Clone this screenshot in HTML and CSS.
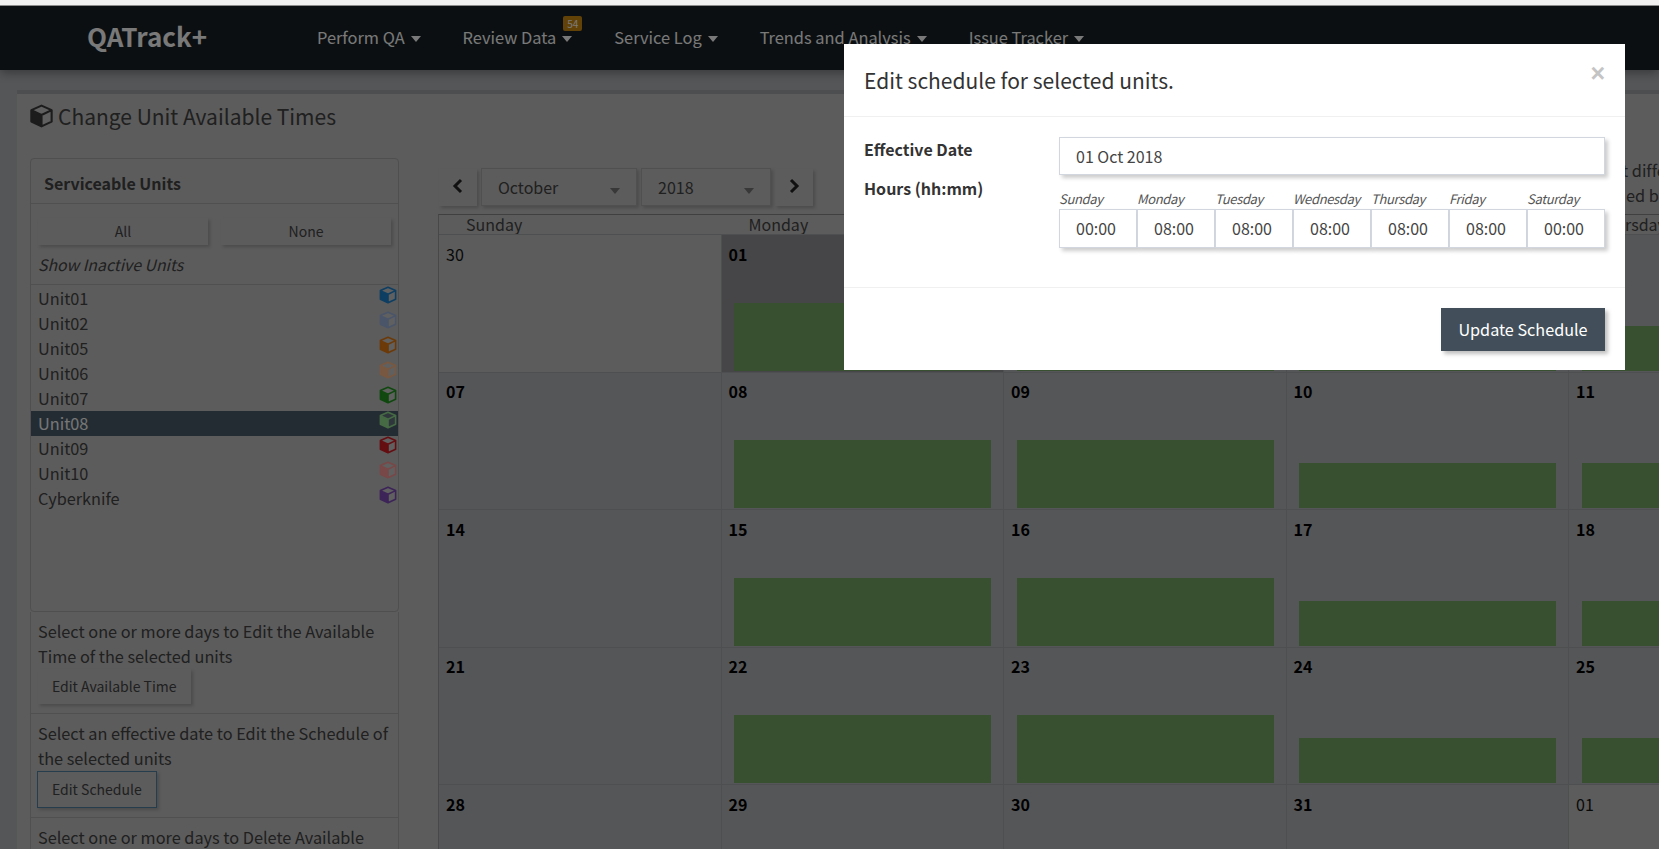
FILE: index.html
```html
<!DOCTYPE html>
<html lang="en">
<head>
<meta charset="utf-8">
<title>Change Unit Available Times</title>
<link rel="stylesheet" href="styles.css">
</head>
<body>
<svg class="defs" width="0" height="0" aria-hidden="true">
  <symbol id="cube" viewBox="0 0 18 18">
    <path class="face" d="M9 1.2 16.6 4.6V13.2L9 16.8 1.4 13.2V4.6Z" fill="#fff" fill-opacity=".12"/>
    <path d="M1.4 5 9 8.4V16.8L1.4 13.2Z" fill="currentColor"/>
    <path d="M9 1.2 16.6 4.6V13.2L9 16.8 1.4 13.2V4.6ZM1.4 4.6 9 8.2 16.6 4.6M9 8.2V16.8" fill="none" stroke="currentColor" stroke-width="1.6" stroke-linejoin="round"/>
  </symbol>
</svg>
<div class="strip"></div>
<div class="app">
  <nav class="nav">
    <a class="logo">QATrack+</a>
    <ul class="menu">
      <li class="menu-item">Perform QA<i class="caret"></i></li>
      <li class="menu-item">Review Data<i class="caret"></i><span class="badge">54</span></li>
      <li class="menu-item">Service Log<i class="caret"></i></li>
      <li class="menu-item">Trends and Analysis<i class="caret"></i></li>
      <li class="menu-item">Issue Tracker<i class="caret"></i></li>
    </ul>
  </nav>
  <main class="wrapper">
    <section class="box">
      <h1 class="title"><svg class="title-icon"><use href="#cube"/></svg>Change Unit Available Times</h1>
      <div class="columns">
        <aside class="sidebar">
          <div class="panel">
            <h2 class="panel-head">Serviceable Units</h2>
            <div class="pick">
              <button class="btn btn-wide">All</button>
              <button class="btn btn-wide">None</button>
            </div>
            <div class="inactive">Show Inactive Units</div>
            <ul class="units">
              <li class="unit">Unit01<svg class="unit-icon c-blue"><use href="#cube"/></svg></li>
              <li class="unit">Unit02<svg class="unit-icon c-blue-l"><use href="#cube"/></svg></li>
              <li class="unit">Unit05<svg class="unit-icon c-orange"><use href="#cube"/></svg></li>
              <li class="unit">Unit06<svg class="unit-icon c-orange-l"><use href="#cube"/></svg></li>
              <li class="unit">Unit07<svg class="unit-icon c-green"><use href="#cube"/></svg></li>
              <li class="unit unit-on">Unit08<svg class="unit-icon c-green-l"><use href="#cube"/></svg></li>
              <li class="unit">Unit09<svg class="unit-icon c-red"><use href="#cube"/></svg></li>
              <li class="unit">Unit10<svg class="unit-icon c-red-l"><use href="#cube"/></svg></li>
              <li class="unit">Cyberknife<svg class="unit-icon c-purple"><use href="#cube"/></svg></li>
            </ul>
          </div>
          <div class="action">
            <p class="action-text">Select one or more days to Edit the Available Time of the selected units</p>
            <button class="btn btn-action">Edit Available Time</button>
          </div>
          <div class="action">
            <p class="action-text">Select an effective date to Edit the Schedule of the selected units</p>
            <button class="btn btn-action btn-focus">Edit Schedule</button>
          </div>
          <div class="action">
            <p class="action-text">Select one or more days to Delete Available Time of the selected units</p>
          </div>
        </aside>
        <div class="calendar">
          <div class="toolbar">
            <button class="btn btn-arrow"><svg class="chev" viewBox="0 0 12 16"><path d="M9 2 3 8l6 6" fill="none" stroke="currentColor" stroke-width="3"/></svg></button>
            <div class="select select-month">October<i class="select-caret"></i></div>
            <div class="select select-year">2018<i class="select-caret"></i></div>
            <button class="btn btn-arrow"><svg class="chev" viewBox="0 0 12 16"><path d="M3 2l6 6-6 6" fill="none" stroke="currentColor" stroke-width="3"/></svg></button>
            <div class="note">t different<span class="note-line">ed by</span></div>
          </div>
          <div class="days">
            <div class="day-name">Sunday</div><div class="day-name">Monday</div><div class="day-name">Tuesday</div><div class="day-name">Wednesday</div><div class="day-name">Thursday</div><div class="day-name">Friday</div><div class="day-name">Saturday</div>
          </div>
          <div class="grid">
            <div class="cell cell-out"><span class="num num-out">30</span></div>
            <div class="cell cell-sel"><span class="num">01</span><i class="bar tall"></i></div>
            <div class="cell"><span class="num">02</span><i class="bar tall"></i></div>
            <div class="cell"><span class="num">03</span><i class="bar short"></i></div>
            <div class="cell"><span class="num">04</span><i class="bar short"></i></div>
            <div class="cell"><span class="num">05</span><i class="bar short"></i></div>
            <div class="cell"><span class="num">06</span></div>

            <div class="cell"><span class="num">07</span></div>
            <div class="cell"><span class="num">08</span><i class="bar tall"></i></div>
            <div class="cell"><span class="num">09</span><i class="bar tall"></i></div>
            <div class="cell"><span class="num">10</span><i class="bar short"></i></div>
            <div class="cell"><span class="num">11</span><i class="bar short"></i></div>
            <div class="cell"><span class="num">12</span><i class="bar short"></i></div>
            <div class="cell"><span class="num">13</span></div>

            <div class="cell"><span class="num">14</span></div>
            <div class="cell"><span class="num">15</span><i class="bar tall"></i></div>
            <div class="cell"><span class="num">16</span><i class="bar tall"></i></div>
            <div class="cell"><span class="num">17</span><i class="bar short"></i></div>
            <div class="cell"><span class="num">18</span><i class="bar short"></i></div>
            <div class="cell"><span class="num">19</span><i class="bar short"></i></div>
            <div class="cell"><span class="num">20</span></div>

            <div class="cell"><span class="num">21</span></div>
            <div class="cell"><span class="num">22</span><i class="bar tall"></i></div>
            <div class="cell"><span class="num">23</span><i class="bar tall"></i></div>
            <div class="cell"><span class="num">24</span><i class="bar short"></i></div>
            <div class="cell"><span class="num">25</span><i class="bar short"></i></div>
            <div class="cell"><span class="num">26</span><i class="bar short"></i></div>
            <div class="cell"><span class="num">27</span></div>

            <div class="cell"><span class="num">28</span></div>
            <div class="cell"><span class="num">29</span></div>
            <div class="cell"><span class="num">30</span></div>
            <div class="cell"><span class="num">31</span></div>
            <div class="cell cell-out"><span class="num num-out">01</span></div>
            <div class="cell cell-out"><span class="num num-out">02</span></div>
            <div class="cell cell-out"><span class="num num-out">03</span></div>
          </div>
        </div>
      </div>
    </section>
  </main>
  <div class="backdrop"></div>
</div>
<div class="modal">
  <header class="modal-head">
    <h3 class="modal-title">Edit schedule for selected units.</h3>
    <span class="close">×</span>
  </header>
  <div class="modal-body">
    <div class="labels">
      <div class="label label-date">Effective Date</div>
      <div class="label">Hours (hh:mm)</div>
    </div>
    <div class="fields">
      <div class="input input-date">01 Oct 2018</div>
      <div class="hours">
        <div class="hour"><span class="hour-name">Sunday</span><div class="input input-hour">00:00</div></div>
        <div class="hour"><span class="hour-name">Monday</span><div class="input input-hour">08:00</div></div>
        <div class="hour"><span class="hour-name">Tuesday</span><div class="input input-hour">08:00</div></div>
        <div class="hour"><span class="hour-name">Wednesday</span><div class="input input-hour">08:00</div></div>
        <div class="hour"><span class="hour-name">Thursday</span><div class="input input-hour">08:00</div></div>
        <div class="hour"><span class="hour-name">Friday</span><div class="input input-hour">08:00</div></div>
        <div class="hour"><span class="hour-name">Saturday</span><div class="input input-hour">00:00</div></div>
      </div>
    </div>
  </div>
  <footer class="modal-foot">
    <button class="btn-primary">Update Schedule</button>
  </footer>
</div>
</body>
</html>
```

FILE: styles.css
```css
* { box-sizing: border-box; }
html, body { margin: 0; padding: 0; height: 849px; overflow: hidden; }
body {
  font-family: "Noto Sans CJK SC", "Noto Sans CJK JP", "Noto Sans", sans-serif;
  font-size: 16px;
  line-height: 25px;
  color: #404040;
  background: #f1f1f1;
}
ul { list-style: none; margin: 0; padding: 0; }
h1, h2, h3, p { margin: 0; font-weight: 400; }
button { font: inherit; cursor: pointer; }
.defs { position: absolute; }

.strip { height: 6px; background: #f1f1f1; border-bottom: 1px solid #8c8c8c; }
.app { position: relative; height: 843px; overflow: hidden; background: #a9adb0; }
.backdrop { position: absolute; inset: 0; background: rgba(0, 0, 0, .5); }

.nav {
  height: 64px;
  display: flex;
  align-items: center;
  background: #161e22;
  color: #fff;
  box-shadow: 0 3px 10px rgba(0, 0, 0, .35);
}
.logo { width: 317px; padding-left: 87px; font-size: 26px; font-weight: 700; line-height: 30px; margin-top: -4px; color: #f2f2f2; }
.menu { display: flex; gap: 42px; margin-top: -2px; }
.menu-item { position: relative; font-size: 16.4px; color: #fff; opacity: .95; }
.caret {
  display: inline-block;
  margin-left: 6px;
  vertical-align: 2px;
  border-left: 5px solid transparent;
  border-right: 5px solid transparent;
  border-top: 6px solid currentColor;
}
.badge {
  position: absolute;
  right: -10px;
  top: -9px;
  width: 19px;
  height: 15px;
  border-radius: 2px;
  background: #d08a10;
  font-size: 10px;
  line-height: 15px;
  text-align: center;
  color: #fff;
}

.wrapper { padding: 20px 0 0 17px; }
.box {
  width: 1800px;
  background: #b8b8b8;
  border-top: 4px solid #9a9da0;
  padding: 0 0 0 13px;
}
.title {
  height: 64px;
  margin-left: -1px;
  display: flex;
  align-items: flex-start;
  padding-top: 7px;
  font-size: 21px;
  line-height: 30px;
  color: #404040;
}
.title-icon { width: 25px; height: 24px; margin: 3px 4px 0 0; color: #383838; }
.columns { display: flex; gap: 39px; align-items: flex-start; }

.sidebar { width: 369px; flex: none; font-size: 16.3px; }
.panel {
  height: 454px;
  border: 1px solid #9e9e9e;
  border-radius: 4px;
  background: #b8b8b8;
}
.panel-head {
  height: 45px;
  padding: 12px 13px 0;
  font-size: 16px;
  font-weight: 700;
  border-bottom: 1px solid #a0a0a0;
}
.pick { display: flex; gap: 13px; padding: 14px 7px 0; }
.btn {
  border: 0;
  background: #b8b8b8;
  color: #404040;
  box-shadow: 2px 2px 3px rgba(0, 0, 0, .18);
}
.btn-wide { width: 171px; height: 27px; font-size: 14px; line-height: 27px; padding: 0; }
.inactive { height: 40px; padding: 7px 7px 0; font-size: 15.8px; font-style: italic; border-bottom: 1px solid #a0a0a0; }
.units { padding-top: 1px; }
.unit {
  display: flex;
  justify-content: space-between;
  height: 25px;
  padding: 0 1px 0 7px;
}
.unit-on { background: #485866; color: #eee; }
.unit-icon { width: 18px; height: 18px; }
.c-blue { color: #1c7cc4; }
.c-blue-l { color: #96aad2; }
.c-orange { color: #d87410; }
.c-orange-l { color: #f0b080; }
.c-green { color: #209020; }
.c-green-l { color: #8cd488; }
.c-red { color: #c81c24; }
.c-red-l { color: #f09090; }
.c-purple { color: #7a48b0; }

.action {
  padding: 7px 7px 9px;
  border: 1px solid #a0a0a0;
  border-top: 0;
}
.btn-action { display: block; height: 35px; padding: 0 14px; font-size: 14px; line-height: 35px; }
.btn-focus { margin: 0 0 0 -1px; height: 37px; border: 1px solid #4a7a98; }

.calendar { flex: none; width: 1978px; }
.toolbar { display: flex; align-items: flex-start; height: 56px; padding: 10px 0 0 1px; gap: 4px; }
.btn-arrow { width: 38px; height: 37px; margin-top: 1px; padding: 0; color: #222; display: flex; align-items: center; justify-content: center; }
.chev { width: 12px; height: 16px; margin-top: -3px; }
.select {
  position: relative;
  height: 38px;
  padding: 6px 16px;
  border: 1px solid #a0a0a0;
  box-shadow: 2px 2px 3px rgba(0, 0, 0, .18);
  line-height: 25px;
}
.select-month { width: 156px; }
.select-year { width: 130px; }
.select-caret {
  position: absolute;
  right: 16px;
  top: 19px;
  border-left: 5px solid transparent;
  border-right: 5px solid transparent;
  border-top: 6px solid #707070;
}
.note { margin-left: 805px; margin-top: -10px; white-space: nowrap; font-variant-ligatures: none; font-size: 16.3px; }
.note-line { display: block; padding-left: 4px; }

.days {
  display: grid;
  grid-template-columns: repeat(7, 282.5px);
  height: 20px;
  border-top: 1px solid #808080;
  border-left: 1px solid #909090;
  line-height: 19px;
  overflow: hidden;
}
.day-name { padding-left: 27px; }
.grid {
  display: grid;
  grid-template-columns: repeat(7, 282.5px);
  grid-auto-rows: 137.5px;
  border-left: 1px solid #909090;
}
.cell {
  display: flex;
  flex-direction: column;
  background: #aaacb0;
  border-top: 1px solid #9c9ea2;
  border-right: 1px solid #9c9ea2;
  padding: 8.5px 0 1px;
}
.cell-out { background: #b8b8b8; }
.cell-sel { background: #8c8c90; }
.num { padding-left: 7px; font-weight: 700; line-height: 20px; color: #000; }
.num-out { font-weight: 400; color: #111; }
.bar { display: block; margin: auto 12px 0 12.5px; background: #70a060; }
.tall { height: 68px; }
.short { height: 45px; }

.modal {
  position: absolute;
  left: 844px;
  top: 44px;
  width: 781px;
  height: 326px;
  background: #fff;
  color: #333;
}
.modal-head {
  position: relative;
  height: 73px;
  padding: 21px 20px 0;
  border-bottom: 1px solid #f0f0f0;
}
.modal-title { font-size: 21px; line-height: 30px; }
.close {
  position: absolute;
  right: 20px;
  top: 14px;
  font-family: "Liberation Sans", sans-serif;
  font-size: 25px;
  font-weight: 700;
  line-height: 30px;
  color: #c4c4c4;
}
.modal-body {
  display: flex;
  height: 171px;
  padding: 20px 20px 0;
  border-bottom: 1px solid #f0f0f0;
}
.labels { width: 195px; flex: none; font-weight: 700; }
.label { height: 25px; }
.label-date { margin-bottom: 14px; }
.fields { flex: 1; }
.input {
  border: 1px solid #d2d6de;
  box-shadow: 3px 3px 4px rgba(0, 0, 0, .2);
  background: #fff;
  color: #444;
}
.input-date { height: 38px; padding: 6px 16px; }
.hours { display: grid; grid-template-columns: repeat(7, 1fr); margin-top: 13px; }
.hour-name { display: block; height: 21px; font-size: 13px; line-height: 21px; letter-spacing: -.35px; font-style: italic; white-space: nowrap; color: #555; }
.input-hour { height: 39px; padding: 6px 0 0 16px; }
.modal-foot { display: flex; justify-content: flex-end; padding: 20px 20px; }
.btn-primary {
  width: 164px;
  height: 43px;
  padding: 0;
  font-size: 16.2px;
  border: 0;
  background: #424f5a;
  color: #fff;
  box-shadow: 3px 3px 4px rgba(0, 0, 0, .25);
}
```
